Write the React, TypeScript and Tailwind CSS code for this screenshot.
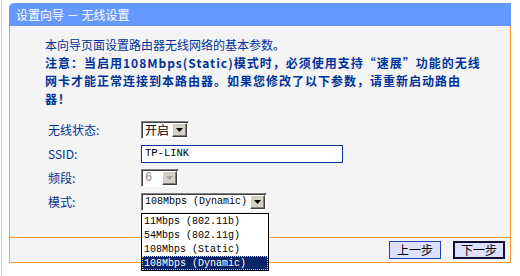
import React from 'react';

const cn = '"Noto Sans CJK SC", sans-serif';
const mono = '"Liberation Mono", "Noto Sans CJK SC", monospace';

const Arrow: React.FC<{ disabled?: boolean }> = ({ disabled }) => (
  <span className="flex h-full w-[15px] shrink-0 items-center justify-center border border-t-white border-l-white border-b-[#404040] border-r-[#404040] bg-[#d4d0c8] shadow-[inset_-1px_-1px_0_#808080]">
    <svg width="7" height="4" viewBox="0 0 7 4">
      <polygon points="0,0 7,0 3.5,4" fill={disabled ? '#a0a0a0' : '#000'} />
    </svg>
  </span>
);

const Select: React.FC<{ w: string; disabled?: boolean; children: React.ReactNode }> = ({ w, disabled, children }) => (
  <div
    className={`${w} flex h-[18px] items-stretch border border-t-[#808080] border-l-[#808080] border-b-white border-r-white bg-white p-px shadow-[inset_1px_1px_0_#404040]`}
  >
    <span
      className={`flex min-w-0 flex-1 items-center whitespace-nowrap pl-[2px] leading-[14px] ${
        disabled ? 'text-[#8c8c8c]' : 'text-black'
      }`}
    >
      {children}
    </span>
    <Arrow disabled={disabled} />
  </div>
);

const modes = ['11Mbps (802.11b)', '54Mbps (802.11g)', '108Mbps (Static)', '108Mbps (Dynamic)'];

const App: React.FC = () => {
  return (
    <div className="flex h-[276px] w-[520px] overflow-hidden bg-white" style={{ fontFamily: cn }}>
      <div className="ml-px w-px bg-[#cccccc]" />
      <div className="ml-[7px] mt-[3px] w-[502px]">
        <div className="flex h-[23px] items-center rounded-tl-[5px] bg-[#6699ff] pl-[7px] text-[12px] text-white">
          设置向导 － 无线设置
        </div>
        <div className="border-x border-b border-[#ff9933] bg-[#f4f4f4]">
          <div className="h-[212px] border-b border-[#ff9933] pl-[35px] pt-[10px] text-[12px] text-[#003399]">
            <p className="leading-[18px]">本向导页面设置路由器无线网络的基本参数。</p>
            <p className="whitespace-nowrap font-bold leading-[18px] tracking-[1px]">
              注意：当启用108Mbps(Static)模式时，必须使用支持“速展”功能的无线
              <br />
              网卡才能正常连接到本路由器。如果您修改了以下参数，请重新启动路由
              <br />
              器！
            </p>
            <div className="mt-[10px] pl-[3px]">
              <div className="flex h-[24px] items-center">
                <span className="w-[93px]">无线状态:</span>
                <Select w="w-[48px]">
                  <span className="text-[12px] leading-[14px]">开启</span>
                </Select>
              </div>
              <div className="flex h-[24px] items-center">
                <span className="w-[93px]">SSID:</span>
                <div
                  className="flex h-[18px] w-[202px] items-center border border-[#0a3399] bg-white pl-[3px] text-[10.5px] text-black"
                  style={{ fontFamily: mono }}
                >
                  TP-LINK
                </div>
              </div>
              <div className="flex h-[24px] items-center">
                <span className="w-[93px]">频段:</span>
                <div className="text-[12px]" style={{ fontFamily: mono }}>
                  <Select w="w-[38px]" disabled>
                    6
                  </Select>
                </div>
              </div>
              <div className="flex h-[24px] items-center">
                <span className="w-[93px]">模式:</span>
                <div className="relative text-[10px]" style={{ fontFamily: mono }}>
                  <Select w="w-[126px]">108Mbps (Dynamic)</Select>
                  <ul className="absolute left-0 top-[20px] z-10 w-[128px] border border-black bg-white">
                    {modes.map((m, i) => (
                      <li
                        key={m}
                        className={`flex h-[14px] items-center whitespace-nowrap pl-[2px] ${
                          i === 3
                            ? 'bg-[#0a246a] text-white outline-1 -outline-offset-1 outline-dotted outline-[#d8d070]'
                            : 'text-black'
                        }`}
                      >
                        {m}
                      </li>
                    ))}
                  </ul>
                </div>
              </div>
            </div>
          </div>
          <div className="flex h-[24px] items-start justify-end gap-[12px] pr-[5px] pt-[3px] text-[12px] text-black">
            <button className="flex h-[18px] w-[52px] items-center justify-center border border-[#2244bb] bg-[#dfe0ff]">
              上一步
            </button>
            <button className="flex h-[18px] w-[52px] items-center justify-center border-2 border-[#10103a] bg-[#dfe0ff]">
              下一步
            </button>
          </div>
        </div>
      </div>
    </div>
  );
};

export default App;
